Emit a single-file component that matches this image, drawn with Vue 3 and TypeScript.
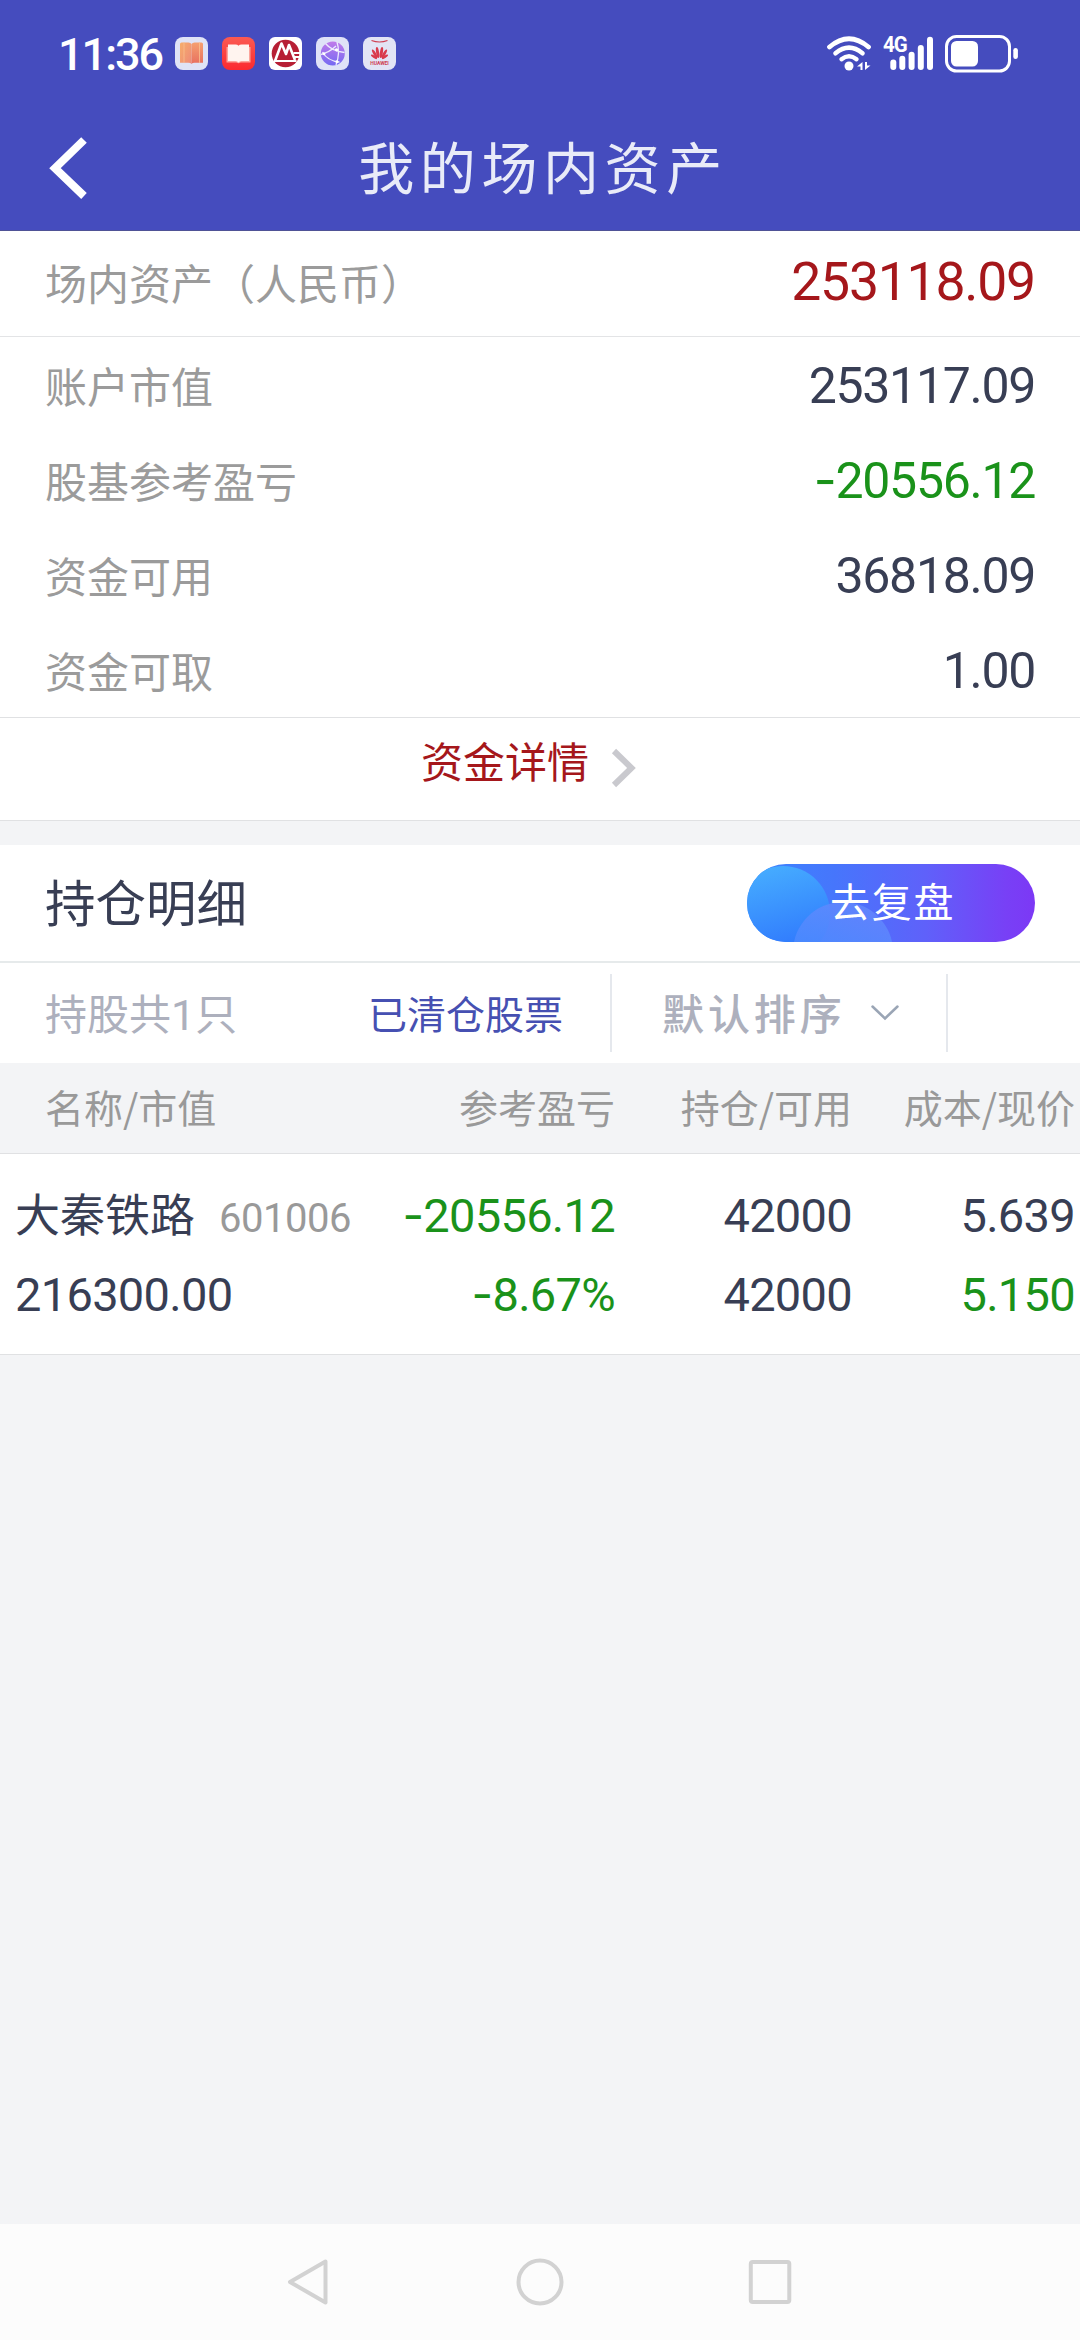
<script setup lang="ts">
interface Balance {
  label: string
  sign?: string
  value: string
  tone?: 'down'
}

const balances: Balance[] = [
  { label: '账户市值', value: '253117.09' },
  { label: '股基参考盈亏', sign: '-', value: '20556.12', tone: 'down' },
  { label: '资金可用', value: '36818.09' },
  { label: '资金可取', value: '1.00' },
]

const columns: string[] = ['名称/市值', '参考盈亏', '持仓/可用', '成本/现价']

const holdings = [
  {
    name: '大秦铁路',
    code: '601006',
    marketValue: '216300.00',
    profit: '20556.12',
    profitRate: '8.67%',
    position: '42000',
    available: '42000',
    cost: '5.639',
    price: '5.150',
  },
]

const signalBars = [
  { x: 7.3, top: 23.5 },
  { x: 16.3, top: 19.7 },
  { x: 25.6, top: 15.7 },
  { x: 34.8, top: 9 },
  { x: 44, top: 0.7 },
]
</script>

<template>
  <div class="screen">
    <header class="top">
      <div class="status">
        <span class="time">11:36</span>
        <div class="apps">
          <svg class="app" viewBox="0 0 33 33">
            <defs>
              <linearGradient id="bookL" x1="0" y1="0" x2="1" y2="1">
                <stop offset="0" stop-color="#f6ad6c" />
                <stop offset="1" stop-color="#ee8a78" />
              </linearGradient>
              <linearGradient id="bookR" x1="0" y1="0" x2="0" y2="1">
                <stop offset="0" stop-color="#f5a070" />
                <stop offset="1" stop-color="#e8705f" />
              </linearGradient>
            </defs>
            <rect width="33" height="33" rx="8" fill="#dfe3f6" />
            <path d="M5 7q0-1.500 1.500-1.500h7q2 0 3 1.500v20q-1-1.200-3-1.200H5z" fill="url(#bookL)" />
            <path d="M28 7q0-1.500-1.500-1.500h-7q-2 0-3 1.500v20q1-1.200 3-1.200H28z" fill="url(#bookR)" />
            <path d="M9 5.500V26M24.500 5.500V26" stroke="#f9c08f" stroke-width="0.800" />
          </svg>
          <svg class="app" viewBox="0 0 33 33">
            <defs>
              <linearGradient id="redTile" x1="0" y1="0" x2="0" y2="1">
                <stop offset="0" stop-color="#fb5a52" />
                <stop offset="1" stop-color="#fb2a30" />
              </linearGradient>
            </defs>
            <rect width="33" height="33" rx="8" fill="url(#redTile)" />
            <path d="M4.500 10h24v15.500h-10q-2 1.500-4 0h-10z" fill="#fca49b" />
            <path d="M6 7.500h7.500q2 0 3 1.200 1-1.200 3-1.200H27V24h-7.500q-2 0-3 1.500-1-1.500-3-1.500H6z" fill="#fff4ef" />
          </svg>
          <svg class="app" viewBox="0 0 33 33">
            <rect width="33" height="33" rx="6" fill="#fff" />
            <circle cx="16.500" cy="16.500" r="13.800" fill="#b71f35" />
            <path d="M6 24 12.500 6.500 17 17 20 8l6 15" fill="none" stroke="#fff" stroke-width="2.600" stroke-linejoin="round" />
            <path d="M9 22l3.500-8 3.500 8z" fill="#b71f35" />
            <path d="M5 24h22.500M24.500 16h7M25.500 20h6" stroke="#fff" stroke-width="2" />
          </svg>
          <svg class="app" viewBox="0 0 33 33">
            <defs>
              <linearGradient id="globe" x1="0" y1="0" x2="0" y2="1">
                <stop offset="0" stop-color="#c07bea" />
                <stop offset="1" stop-color="#7569f2" />
              </linearGradient>
            </defs>
            <rect width="33" height="33" rx="8" fill="#dfe2f7" />
            <circle cx="16.800" cy="16.500" r="12" fill="url(#globe)" />
            <path d="M9.500 6.500q6 7.500 19 9M5 17.500q8-2 15-8.500M6.500 15q5 9 17 10M21 5q3.500 11-1 23" fill="none" stroke="#eceafd" stroke-width="1.300" />
            <circle cx="20.500" cy="12.800" r="1.600" fill="#fff" />
            <circle cx="8" cy="16.800" r="1.400" fill="#fff" />
            <circle cx="21" cy="24.800" r="1.500" fill="#fff" />
          </svg>
          <svg class="app" viewBox="0 0 33 33">
            <rect width="33" height="33" rx="8" fill="#e2e4f5" />
            <path d="M8.500 3.500q8 3 16 0" fill="none" stroke="#cf4052" stroke-width="1.200" />
            <g fill="#d93a4c">
              <ellipse cx="14.600" cy="15.500" rx="1.500" ry="5.500" transform="rotate(-9 14.600 15.500)" />
              <ellipse cx="18.400" cy="15.500" rx="1.500" ry="5.500" transform="rotate(9 18.400 15.500)" />
              <ellipse cx="11.700" cy="16.800" rx="1.400" ry="4.900" transform="rotate(-30 11.700 16.800)" />
              <ellipse cx="21.300" cy="16.800" rx="1.400" ry="4.900" transform="rotate(30 21.300 16.800)" />
              <ellipse cx="11" cy="19.800" rx="1.200" ry="3.600" transform="rotate(-55 11 19.800)" />
              <ellipse cx="22" cy="19.800" rx="1.200" ry="3.600" transform="rotate(55 22 19.800)" />
            </g>
            <text class="brand" x="16.500" y="28" text-anchor="middle">HUAWEI</text>
          </svg>
        </div>

        <div class="signals">
          <svg class="wifi" viewBox="0 0 45 35" fill="none" stroke="#fff" stroke-linecap="round">
            <path d="M2.500 11q19.500-16.500 39 0" stroke-width="4.800" />
            <path d="M8.500 17.200q13.500-11 27 0" stroke-width="4.600" />
            <path d="M14.500 23.200q7.500-6 15 0" stroke-width="4.400" />
            <circle cx="22" cy="30" r="4.500" fill="#fff" stroke="none" />
            <path d="M30 30.500l5.500-4.500v8h-2v-3.500zM43.500 29.500 38 34v-8h2v3.500z" fill="#fff" stroke="none" />
          </svg>
          <div class="cellular">
            <svg class="bars" viewBox="0 0 48 35">
              <rect v-for="bar in signalBars" :key="bar.x" :x="bar.x - 3" :y="bar.top" width="6" :height="34 - bar.top" rx="3" fill="#fff" />
            </svg>
            <span class="network">4G</span>
          </div>
          <svg class="battery" viewBox="0 0 74 38">
            <rect x="1.500" y="1.500" width="63" height="34.500" rx="10" fill="none" stroke="#fff" stroke-width="3" />
            <rect x="6" y="6" width="27" height="25.500" rx="5.500" fill="#fff" />
            <rect x="68.300" y="13" width="4.600" height="11" rx="2.300" fill="#fff" />
          </svg>
        </div>
      </div>

      <div class="titlebar">
        <svg class="back" viewBox="0 0 40 64">
          <path d="M35 4 6 32.200 35 60" fill="none" stroke="#fff" stroke-width="8" />
        </svg>
        <h1>我的场内资产</h1>
      </div>
    </header>

    <section class="total">
      <span class="label">场内资产（人民币）</span>
      <span class="total-value">253118.09</span>
    </section>

    <section class="balances">
      <div v-for="item in balances" :key="item.label" class="balance">
        <span class="label">{{ item.label }}</span>
        <span class="value" :class="item.tone"><i v-if="item.sign" class="sign">{{ item.sign }}</i>{{ item.value }}</span>
      </div>
    </section>

    <section class="more">
      <span>资金详情</span>
      <svg viewBox="0 0 26 40">
        <path d="M3 3 20.500 20 3 37" fill="none" stroke="#c9c9ce" stroke-width="6" />
      </svg>
    </section>

    <section class="heading">
      <h2>持仓明细</h2>
      <button type="button" class="review">
        <svg viewBox="0 0 288 78">
          <defs>
            <linearGradient id="pill" x1="0" y1="0" x2="1" y2="0">
              <stop offset="0" stop-color="#3a86ff" />
              <stop offset="0.300" stop-color="#4676fc" />
              <stop offset="0.620" stop-color="#5f61fa" />
              <stop offset="0.900" stop-color="#7840f6" />
              <stop offset="1" stop-color="#7c38f5" />
            </linearGradient>
            <linearGradient id="bubbleA" x1="0.300" y1="0" x2="0.550" y2="0.900">
              <stop offset="0" stop-color="#46adff" />
              <stop offset="1" stop-color="#3079fd" />
            </linearGradient>
            <linearGradient id="bubbleB" x1="0.500" y1="0" x2="0.300" y2="0.600">
              <stop offset="0" stop-color="#6488fd" stop-opacity="0.800" />
              <stop offset="1" stop-color="#4a8cff" stop-opacity="0.800" />
            </linearGradient>
            <clipPath id="pillClip"><rect width="288" height="78" rx="39" /></clipPath>
          </defs>
          <g clip-path="url(#pillClip)">
            <rect width="288" height="78" fill="url(#pill)" />
            <circle cx="36" cy="49" r="47" fill="url(#bubbleA)" />
            <circle cx="96" cy="88" r="50" fill="url(#bubbleB)" />
          </g>
        </svg>
        <span>去复盘</span>
      </button>
    </section>

    <section class="filters">
      <span class="count">持股共<b>1</b>只</span>
      <span class="cleared">已清仓股票</span>
      <div class="sort">
        <span>默认排序</span>
        <svg viewBox="0 0 28 16">
          <path d="M1.500 1.500 14 13.500 26.500 1.500" fill="none" stroke="#9aa5b5" stroke-width="2.500" stroke-linecap="round" />
        </svg>
      </div>
    </section>

    <section class="table">
      <div class="row thead">
        <span v-for="column in columns" :key="column">{{ column }}</span>
      </div>
      <div v-for="stock in holdings" :key="stock.code" class="row stock">
        <div>
          <p><span class="name">{{ stock.name }}</span><span class="code">{{ stock.code }}</span></p>
          <p>{{ stock.marketValue }}</p>
        </div>
        <div class="down">
          <p><i class="sign">-</i>{{ stock.profit }}</p>
          <p><i class="sign">-</i>{{ stock.profitRate }}</p>
        </div>
        <div>
          <p>{{ stock.position }}</p>
          <p>{{ stock.available }}</p>
        </div>
        <div>
          <p>{{ stock.cost }}</p>
          <p class="down">{{ stock.price }}</p>
        </div>
      </div>
    </section>

    <nav class="navbar">
      <svg viewBox="0 0 48 50"><path d="M39.500 4.500 4 25 39.500 45.500z" stroke-linejoin="round" /></svg>
      <svg viewBox="0 0 48 50"><circle cx="24" cy="25" r="21.500" /></svg>
      <svg viewBox="0 0 48 50"><rect x="4.800" y="5" width="38.500" height="40" rx="2" /></svg>
    </nav>
  </div>
</template>

<style>
body {
  margin: 0;
  background: #f3f4f6;
}
</style>

<style scoped>
.screen {
  --cjk: 'Noto Sans CJK SC', sans-serif;
  --num: Roboto, 'Noto Sans CJK SC', sans-serif;
  display: flex;
  flex-direction: column;
  width: 1080px;
  height: 2340px;
  overflow: hidden;
  background: #f3f4f6;
  color: #383e54;
  font-family: var(--cjk);
  line-height: 1;
}

.screen * {
  box-sizing: border-box;
}

svg {
  display: block;
  flex: none;
}

p,
h1,
h2 {
  margin: 0;
  font-weight: 400;
}

.top {
  height: 231px;
  background: #454cbe;
  border-bottom: 1px solid #4f5296;
  color: #fff;
}

.status {
  display: flex;
  align-items: center;
  height: 107px;
  padding: 0 61px 0 58px;
}

.time {
  width: 117px;
  padding-top: 1px;
  font: 500 45px/1 var(--num);
  letter-spacing: -2px;
}

.apps {
  display: flex;
  gap: 14px;
}

.app {
  width: 33px;
  height: 33px;
}

.brand {
  font: 700 5px/1 Roboto, sans-serif;
  fill: #cf4052;
}

.signals {
  display: flex;
  align-items: center;
  margin-left: auto;
}

.wifi {
  width: 45px;
  height: 35px;
}

.cellular {
  position: relative;
  margin-left: 14px;
}

.bars {
  width: 48px;
  height: 35px;
}

.network {
  position: absolute;
  top: -1px;
  left: -3px;
  font: 700 22px/20px 'Roboto', sans-serif;
  letter-spacing: -1px;
  transform: scaleX(0.93);
  transform-origin: left;
}

.battery {
  width: 74px;
  height: 38px;
  margin-left: 11px;
}

.titlebar {
  display: flex;
  align-items: center;
  height: 122px;
}

.back {
  width: 40px;
  height: 64px;
  margin-left: 49px;
}

h1 {
  flex: 1;
  padding: 0 83px 6px 0;
  color: #e9ebf8;
  font-size: 56px;
  letter-spacing: 5.6px;
  text-align: center;
}

.total,
.balance {
  display: flex;
  align-items: center;
  justify-content: space-between;
  padding: 0 45px;
}

.total {
  height: 106px;
  padding-bottom: 4px;
  background: #fff;
  border-bottom: 1px solid #e3e4e6;
}

.label {
  color: #9b9b9b;
  font-size: 42px;
}

.total-value {
  color: #a5171b;
  font: 400 53.5px/1 var(--num);
  letter-spacing: -1.2px;
}

.balances {
  background: #fff;
}

.balance {
  height: 95px;
}

.value {
  padding-top: 2px;
  font: 400 50px/1 var(--num);
  letter-spacing: -1.3px;
}

.down {
  color: #1a921a;
}

.sign {
  font-family: Inter, sans-serif;
  font-style: normal;
  line-height: 0;
}

.more {
  display: flex;
  align-items: center;
  justify-content: center;
  height: 104px;
  padding: 0 22px 19px 0;
  background: #fff;
  border-top: 1px solid #e0e1e3;
  border-bottom: 1px solid #e0e1e3;
  color: #a5171b;
  font-size: 42px;
}

.more svg {
  width: 26px;
  height: 40px;
  margin: 17px 0 0 22px;
}

.heading {
  display: flex;
  align-items: center;
  justify-content: space-between;
  height: 118px;
  margin-top: 24px;
  padding: 0 45px;
  background: #fff;
  border-bottom: 2px solid #e6eaeb;
}

h2 {
  padding-bottom: 5px;
  font-size: 50.5px;
}

.review {
  position: relative;
  width: 288px;
  height: 78px;
  padding: 0;
  border: 0;
  background: none;
  color: #fff;
  font: 400 40px/1 var(--cjk);
}

.review svg {
  width: 288px;
  height: 78px;
}

.review span {
  position: absolute;
  top: 16px;
  left: 83px;
  letter-spacing: 1.8px;
  white-space: nowrap;
}

.filters {
  display: flex;
  align-items: center;
  height: 100px;
  padding-left: 45px;
  background: #fff;
  color: #adb0bd;
}

.count {
  width: 323px;
  padding-bottom: 3px;
  font-size: 42px;
}

.count b {
  font: 400 43px/0 Roboto, sans-serif;
}

.cleared {
  width: 242px;
  padding-bottom: 2px;
  color: #4650b2;
  font-size: 39px;
}

.sort {
  display: flex;
  align-items: center;
  width: 338px;
  height: 78px;
  padding-left: 50px;
  border: solid #e5e8ed;
  border-width: 0 2px;
}

.sort span {
  padding-bottom: 3px;
  font-size: 42px;
  font-weight: 500;
  letter-spacing: 3.9px;
}

.sort svg {
  width: 28px;
  height: 16px;
  margin-left: 25px;
}

.row {
  display: grid;
  grid-template-columns: 355px 260px 237px 223px;
}

.row > :not(:first-child) {
  text-align: right;
}

.thead {
  height: 91px;
  padding-top: 1px;
  border-bottom: 1px solid #e0e1e3;
  color: #999;
  font-size: 39px;
  line-height: 85px;
}

.thead span:first-child {
  padding-left: 45px;
}

.stock {
  height: 201px;
  padding-top: 22px;
  background: #fff;
  border-bottom: 1px solid #e0e1e3;
  font: 400 47px/79px var(--num);
  letter-spacing: -0.7px;
}

.stock > :first-child {
  padding-left: 15px;
  white-space: nowrap;
}

.stock p {
  height: 79px;
}

.name {
  font: 400 45px/1 var(--cjk);
  letter-spacing: 0;
}

.code {
  margin-left: 24px;
  color: #999;
  font-size: 40px;
  line-height: 1;
  letter-spacing: -0.5px;
}

.navbar {
  display: flex;
  align-items: center;
  justify-content: space-between;
  height: 116px;
  margin-top: auto;
  padding: 0 286px;
  background: #fcfcfc;
}

.navbar svg {
  width: 48px;
  height: 50px;
  fill: none;
  stroke: #d2d2d2;
  stroke-width: 4;
}
</style>
